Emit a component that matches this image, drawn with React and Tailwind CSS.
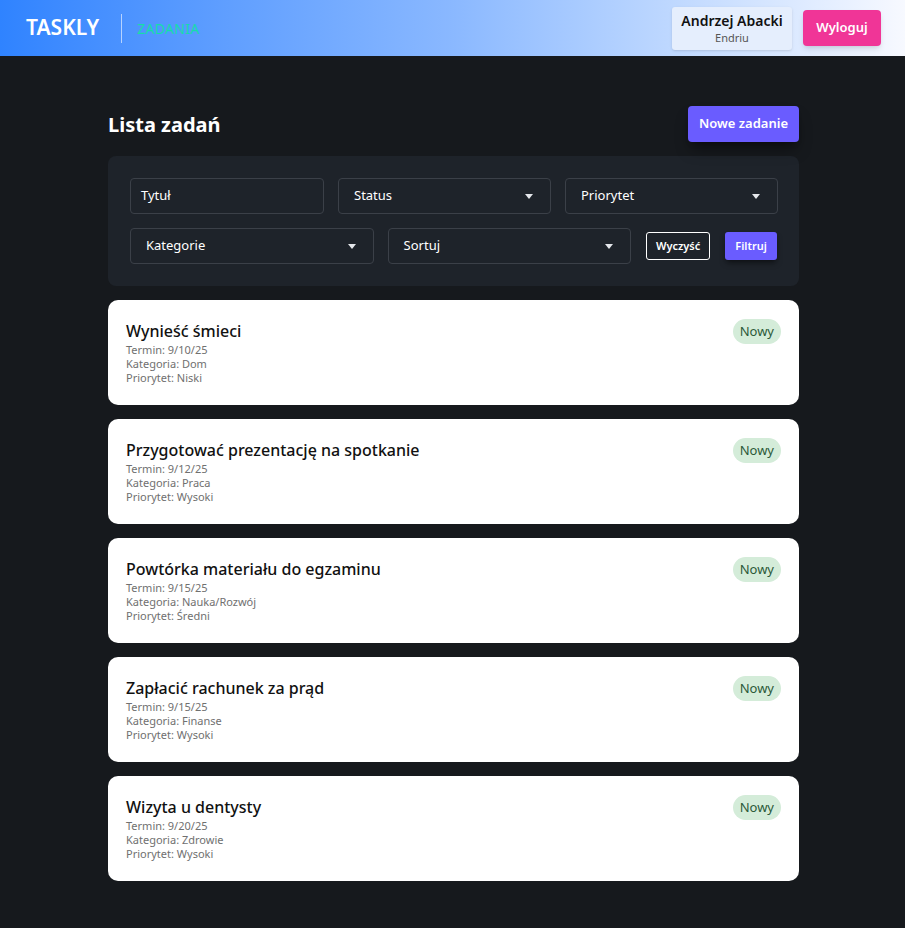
import React from "react";

// ═══════════════════ Data ═══════════════════

const tasks = [
  { title: "Wynieść śmieci", due: "9/10/25", category: "Dom", priority: "Niski" },
  { title: "Przygotować prezentację na spotkanie", due: "9/12/25", category: "Praca", priority: "Wysoki" },
  { title: "Powtórka materiału do egzaminu", due: "9/15/25", category: "Nauka/Rozwój", priority: "Średni" },
  { title: "Zapłacić rachunek za prąd", due: "9/15/25", category: "Finanse", priority: "Wysoki" },
  { title: "Wizyta u dentysty", due: "9/20/25", category: "Zdrowie", priority: "Wysoki" },
];

const Caret = () => (
  <svg width="8" height="5" viewBox="0 0 8 5" className="shrink-0">
    <path d="M0 0h8L4 5z" fill="#e5e7eb" />
  </svg>
);

function SelectBox({ label, className = "" }) {
  return (
    <div className={`flex items-center justify-between h-[36px] pl-[15px] pr-[17px] rounded-[4px] border border-[#3b4048] text-[13px] text-white ${className}`}>
      <span>{label}</span>
      <Caret />
    </div>
  );
}

function TaskCard({ task }) {
  return (
    <div className="bg-white rounded-[10px] h-[105px] pl-[18px] pr-[18px] pt-[19px] flex justify-between">
      <div>
        <h3 className="text-[16px] font-medium text-[#111] leading-[24px]">{task.title}</h3>
        <div className="text-[11px] text-[#707070] leading-[14px]">
          <p>Termin: {task.due}</p>
          <p>Kategoria: {task.category}</p>
          <p>Priorytet: {task.priority}</p>
        </div>
      </div>
      <span className="self-start h-[25px] px-[7px] rounded-full bg-[#d4ecd9] text-[#2c5a39] text-[13px] leading-[25px]">Nowy</span>
    </div>
  );
}

export default function App() {
  return (
    <div className="min-h-[928px] bg-[#16191d]" style={{ fontFamily: '"Noto Sans", "Open Sans", sans-serif' }}>
      <header className="h-[56px] flex items-center justify-between pl-[26px] pr-[24px] bg-gradient-to-r from-[#2f83ff] via-[#8ab8ff] to-[#f7f9ff]">
        <div className="flex items-center">
          <span className="text-[21px] font-semibold text-white tracking-[0px]">TASKLY</span>
          <span className="ml-[22px] mr-[15px] w-px h-[29px] bg-white/60" />
          <span className="text-[14px] text-[#16dcaa] tracking-[0.3px]">ZADANIA</span>
        </div>
        <div className="flex items-center gap-[11px]">
          <div className="w-[120px] h-[43px] flex flex-col items-center justify-center rounded-[3px] bg-[#e5eefd] shadow-sm">
            <span className="text-[14px] font-semibold text-[#111] leading-[18px]">Andrzej Abacki</span>
            <span className="text-[11px] text-[#555] leading-[15px]">Endriu</span>
          </div>
          <button className="w-[78px] h-[36px] rounded-[4px] bg-[#f03597] text-white text-[13px] font-semibold shadow-md">Wyloguj</button>
        </div>
      </header>

      <main className="w-[691px] ml-[108px] pt-[50px] pb-[48px]">
        <div className="flex items-center justify-between h-[36px]">
          <h1 className="text-[20px] font-bold text-white mt-[2px]">Lista zadań</h1>
          <button className="w-[111px] h-[36px] rounded-[4px] bg-[#6a5cff] text-white text-[13px] font-semibold shadow-lg shadow-black/40">Nowe zadanie</button>
        </div>

        <div className="mt-[14px] rounded-[8px] bg-[#1e232a] px-[22px] pt-[22px] pb-[22px] flex flex-col gap-[14px]">
          <div className="grid grid-cols-[194px_213px_213px] gap-[14px]">
            <div className="h-[36px] flex items-center pl-[10px] rounded-[4px] border border-[#3b4048] text-[13px] text-white">Tytuł</div>
            <SelectBox label="Status" />
            <SelectBox label="Priorytet" />
          </div>
          <div className="flex items-center">
            <SelectBox label="Kategorie" className="w-[244px]" />
            <SelectBox label="Sortuj" className="w-[244px] ml-[14px]" />
            <button className="ml-[15px] w-[64px] h-[28px] rounded-[3px] border border-white text-white text-[11px] font-semibold">Wyczyść</button>
            <button className="ml-[15px] w-[52px] h-[28px] rounded-[3px] bg-[#6a5cff] text-white text-[11px] font-semibold shadow-md shadow-black/40">Filtruj</button>
          </div>
        </div>

        <div className="mt-[14px] flex flex-col gap-[14px]">
          {tasks.map((t) => (
            <TaskCard key={t.title} task={t} />
          ))}
        </div>
      </main>
    </div>
  );
}
